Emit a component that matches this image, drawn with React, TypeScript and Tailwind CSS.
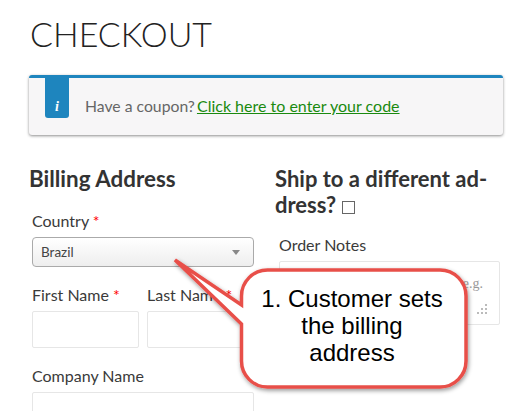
export default function App() {
  return (
    <div className="relative h-[411px] w-[515px] overflow-hidden bg-white font-['Lato',sans-serif] text-[#333]">
      <div className="pl-[29px] pr-[12px]">
        <h1 className="h-[75px] pl-[1px] pt-[12px] text-[34px] font-light leading-[44px] text-[#222]">CHECKOUT</h1>

        {/* Coupon notice */}
        <div className="flex h-[60px] rounded-[3px] border-t-[3px] border-[#1e85be] bg-[#f7f6f7] shadow-[0_1px_3px_rgba(0,0,0,0.45)]">
          <div className="ml-[16px] flex h-[40px] w-[24px] items-end justify-center rounded-b-[3px] bg-[#1e85be] pb-[1px] font-['Liberation_Serif',serif] text-[14px] font-bold italic leading-[20px] text-white">
            i
          </div>
          <p className="ml-[16px] pt-[17px] text-[15.75px] leading-[22px] text-[#666]">
            Have a coupon?{" "}
            <a href="#" className="ml-[-2px] text-[16px] text-[#1a8a0f] underline">Click here to enter your code</a>
          </p>
        </div>

        <div className="mt-[31px] flex">
          {/* Billing column */}
          <div className="w-[225px]">
            <h3 className="text-[22.4px] font-bold leading-[26px] text-[#333]">Billing Address</h3>
            <label className="mt-[19px] block pl-[3px] text-[16px] leading-[20px] text-[#3a3a3a]">
              Country <span className="text-[#f00]">*</span>
            </label>
            <div className="ml-[3px] mt-[6px] flex h-[30px] w-[222px] items-center justify-between rounded-[4px] border border-[#aaa] bg-gradient-to-b from-white to-[#eee] pl-[8px] pr-[13px] pt-[1px] text-[13.5px] text-[#444]">
              Brazil
              <span className="mb-[1px] h-0 w-0 border-x-[4px] border-t-[5px] border-x-transparent border-t-[#888]" />
            </div>
            <div className="ml-[3px] mt-[18px] flex w-[222px] gap-[8px]">
              <div className="w-[107px]">
                <label className="block text-[16px] leading-[20px] text-[#3a3a3a]">
                  First Name <span className="text-[#f00]">*</span>
                </label>
                <div className="mt-[6px] h-[37px] rounded-[2px] border border-[#e6e6e6] bg-white" />
              </div>
              <div className="w-[107px]">
                <label className="block whitespace-nowrap text-[16px] leading-[20px] text-[#3a3a3a]">
                  Last Name <span className="text-[#f00]">*</span>
                </label>
                <div className="mt-[6px] h-[37px] rounded-[2px] border border-[#e6e6e6] bg-white" />
              </div>
            </div>
            <label className="ml-[3px] mt-[18px] block text-[16px] leading-[20px] text-[#3a3a3a]">Company Name</label>
            <div className="ml-[3px] mt-[6px] h-[37px] w-[222px] rounded-[2px] border border-[#e6e6e6] bg-white" />
          </div>

          {/* Shipping column */}
          <div className="ml-[21px] w-[228px]">
            <h3 className="text-[22px] font-bold leading-[26px] text-[#333]">
              Ship to a different ad-
              <br />
              dress?{" "}
              <span className="inline-block h-[13px] w-[13px] border border-[#666] align-[-1px]" />
            </h3>
            <label className="ml-[4px] mt-[17px] block text-[16px] leading-[20px] text-[#3a3a3a]">Order Notes</label>
            <div className="relative ml-[4px] mt-[6px] h-[64px] w-[221px] rounded-[2px] border border-[#e6e6e6] bg-white">
              <span className="absolute right-[16px] top-[11px] font-['Liberation_Serif',serif] text-[14px] text-[#999]">e.g.</span>
              <svg className="absolute bottom-[8px] right-[11px]" width="12" height="12" viewBox="0 0 12 12" fill="#bbb">
                <rect x="9" y="0" width="2" height="2" />
                <rect x="5" y="4" width="2" height="2" />
                <rect x="9" y="4" width="2" height="2" />
                <rect x="1" y="8" width="2" height="2" />
                <rect x="5" y="8" width="2" height="2" />
                <rect x="9" y="8" width="2" height="2" />
              </svg>
            </div>
          </div>
        </div>
      </div>

      {/* Callout over the form */}
      <div className="absolute left-[170px] top-[256px] h-[140px] w-[305px]">
        <svg className="absolute inset-0" width="305" height="140" viewBox="170 256 305 140">
          <defs>
            <filter id="callout-shadow" x="-5%" y="-5%" width="112%" height="115%">
              <feDropShadow dx="1" dy="2" stdDeviation="2" floodColor="#000" floodOpacity="0.4" />
            </filter>
          </defs>
          <path
            d="M175 260 L241.500 305 L241.500 296 A26 26 0 0 1 267.500 270 L440 270 A26 26 0 0 1 466 296 L466 361 A26 26 0 0 1 440 387 L267.500 387 A26 26 0 0 1 241.500 361 L241.500 324 Z"
            fill="#fff"
            stroke="#e8504a"
            strokeWidth="3.5"
            strokeLinejoin="miter"
            filter="url(#callout-shadow)"
          />
        </svg>
        <div className="absolute left-[90px] top-[29px] w-[184px] text-center font-['Liberation_Sans',sans-serif] text-[24px] leading-[27px] text-black">
          1. Customer sets the billing address
        </div>
      </div>
    </div>
  );
}
